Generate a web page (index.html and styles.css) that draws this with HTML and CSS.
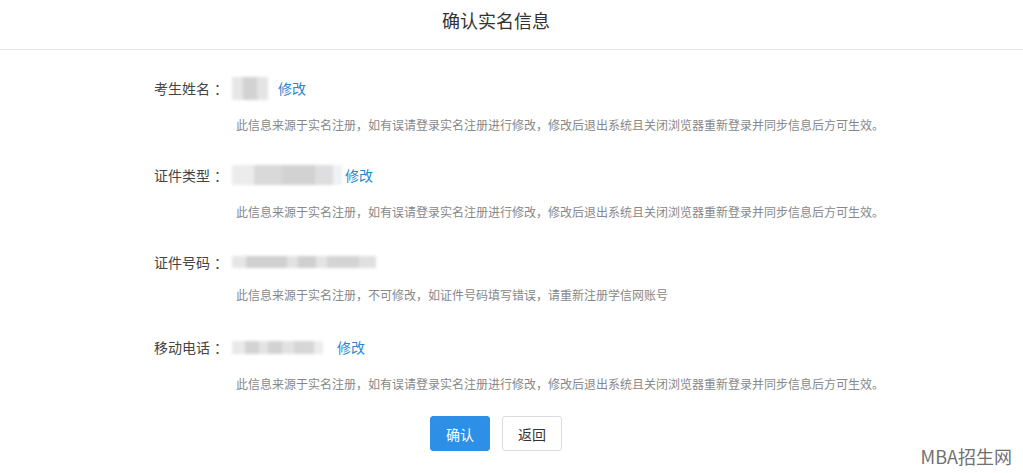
FILE: index.html
```html
<!DOCTYPE html>
<html lang="zh-CN">
<head>
  <meta charset="UTF-8">
  <meta name="viewport" content="width=device-width, initial-scale=1.0">
  <title>确认实名信息</title>
  <link rel="stylesheet" href="styles.css">
</head>
<body>
  <!-- 页面标题 -->
  <div class="header">
    <h1 class="title">确认实名信息</h1>
  </div>

  <div class="page">
    <div class="form">
      <div class="field">
        <div class="field-line">
          <span class="label">考生姓名<span class="colon">：</span></span>
          <span class="value value-name"></span>
          <a class="edit" href="#">修改</a>
        </div>
        <p class="note">此信息来源于实名注册，如有误请登录实名注册进行修改，修改后退出系统且关闭浏览器重新登录并同步信息后方可生效。</p>
      </div>

      <div class="field">
        <div class="field-line">
          <span class="label">证件类型<span class="colon">：</span></span>
          <span class="value value-type"></span>
          <a class="edit" href="#">修改</a>
        </div>
        <p class="note">此信息来源于实名注册，如有误请登录实名注册进行修改，修改后退出系统且关闭浏览器重新登录并同步信息后方可生效。</p>
      </div>

      <div class="field field-short">
        <div class="field-line">
          <span class="label">证件号码<span class="colon">：</span></span>
          <span class="value value-id"></span>
        </div>
        <p class="note">此信息来源于实名注册，不可修改，如证件号码填写错误，请重新注册学信网账号</p>
      </div>

      <div class="field">
        <div class="field-line">
          <span class="label">移动电话<span class="colon">：</span></span>
          <span class="value value-phone"></span>
          <a class="edit" href="#">修改</a>
        </div>
        <p class="note">此信息来源于实名注册，如有误请登录实名注册进行修改，修改后退出系统且关闭浏览器重新登录并同步信息后方可生效。</p>
      </div>
    </div>

    <div class="actions">
      <button class="btn btn-primary" type="button">确认</button>
      <button class="btn btn-default" type="button">返回</button>
    </div>
  </div>

  <div class="watermark">MBA招生网</div>
</body>
</html>
```

FILE: styles.css
```css
/* 确认实名信息页面 */
body {
  margin: 0;
  font-family: "Noto Sans CJK SC", "Liberation Sans", sans-serif;
  background-color: #fff;
  color: #333;
}

.header {
  border-bottom: 1px solid #e8e8e8;
  height: 49px;
  width: 100%;
}

.title {
  width: 992px;
  margin: 0;
  padding-top: 8px;
  font-size: 18px;
  line-height: 24px;
  font-weight: normal;
  text-align: center;
  color: #333;
}

.page {
  width: 992px;
}

.form {
  padding: 26px 0 0 154px;
}

.field {
  margin-bottom: 29px;
}

.field-short {
  margin-bottom: 31px;
}

.field-short .note {
  margin-top: 12px;
}

.field:last-child {
  margin-bottom: 0;
}

.field-line {
  display: flex;
  align-items: center;
  height: 24px;
}

.label {
  width: 78px;
  font-size: 14px;
  line-height: 24px;
  color: #444;
}

.colon {
  margin-left: 4px;
}

/* 打码后的信息 */
.value {
  display: inline-block;
  filter: blur(1.5px);
}

.value-name {
  width: 36px;
  height: 23px;
  margin-right: 10px;
  background: linear-gradient(90deg, #e6e6e6 0 30%, #d2d2d2 30% 70%, #e4e4e4 70%);
}

.value-type {
  width: 110px;
  height: 20px;
  margin-right: 3px;
  background: linear-gradient(90deg, #ececec 0 20%, #d9d9d9 20% 45%, #d2d2d2 45% 75%, #dedede 75% 92%, #eef2f7 92%);
}

.value-id {
  width: 144px;
  height: 12px;
  background: linear-gradient(90deg, #e6e6e6 0 10%, #d0d0d0 10% 38%, #e2e2e2 38% 46%, #cfcfcf 46% 58%, #e4e4e4 58% 66%, #d4d4d4 66% 88%, #e0e0e0 88%);
}

.value-phone {
  width: 91px;
  height: 13px;
  margin-right: 14px;
  background: linear-gradient(90deg, #e9e9e9 0 14%, #d3d3d3 14% 30%, #e3e3e3 30% 40%, #d2d2d2 40% 55%, #e2e2e2 55% 68%, #d6d6d6 68% 90%, #ececec 90%);
}

.edit {
  font-size: 14px;
  line-height: 24px;
  color: #2b86d0;
  text-decoration: none;
}

.note {
  margin: 16px 0 0 82px;
  font-size: 12px;
  line-height: 18px;
  color: #888;
}

.actions {
  display: flex;
  justify-content: center;
  gap: 12px;
  margin-top: 23px;
}

.btn {
  width: 60px;
  height: 35px;
  border-radius: 3px;
  font-family: inherit;
  font-size: 14px;
  padding: 0;
  cursor: pointer;
}

.btn-primary {
  background-color: #2d8fe6;
  border: 1px solid #2d8fe6;
  color: #fff;
}

.btn-default {
  background-color: #fff;
  border: 1px solid #dcdcdc;
  color: #333;
}

.watermark {
  position: absolute;
  right: 11px;
  bottom: 6px;
  font-size: 18px;
  line-height: 22px;
  color: #707070;
}
```
